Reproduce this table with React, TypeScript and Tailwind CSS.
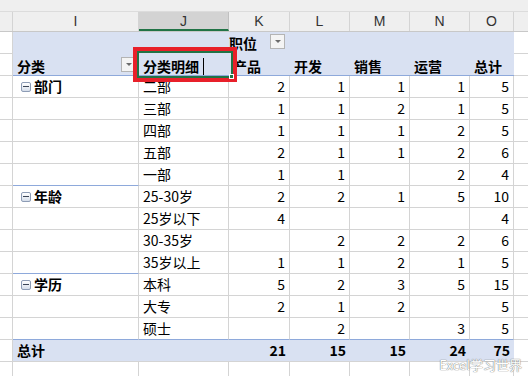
import React from 'react'

type Row = {
  group?: string
  label: string
  vals: (number | null)[]
  lastInGroup?: boolean
}

const rows: Row[] = [
  { group: '部门', label: '二部', vals: [2, 1, 1, 1, 5] },
  { label: '三部', vals: [1, 1, 2, 1, 5] },
  { label: '四部', vals: [1, 1, 1, 2, 5] },
  { label: '五部', vals: [2, 1, 1, 2, 6] },
  { label: '一部', vals: [1, 1, null, 2, 4], lastInGroup: true },
  { group: '年龄', label: '25-30岁', vals: [2, 2, 1, 5, 10] },
  { label: '25岁以下', vals: [4, null, null, null, 4] },
  { label: '30-35岁', vals: [null, 2, 2, 2, 6] },
  { label: '35岁以上', vals: [1, 1, 2, 1, 5], lastInGroup: true },
  { group: '学历', label: '本科', vals: [5, 2, 3, 5, 15] },
  { label: '大专', vals: [2, 1, 2, null, 5] },
  { label: '硕士', vals: [null, 2, null, 3, 5], lastInGroup: true },
]

// widths of K..O
const valCols = ['w-[61px]', 'w-[60px]', 'w-[60px]', 'w-[60px]', 'w-[44px]']
const heads = ['产品', '开发', '销售', '运营', '总计']
const letters = [
  { l: 'K', w: 'w-[61px]' },
  { l: 'L', w: 'w-[60px]' },
  { l: 'M', w: 'w-[60px]' },
  { l: 'N', w: 'w-[60px]' },
  { l: 'O', w: 'w-[44px]' },
]

function Dropdown() {
  return (
    <div className="w-[15px] h-[15px] bg-[#f4f4f4] border border-[#b4b4b4] flex items-center justify-center shrink-0">
      <div className="w-0 h-0 border-l-[3px] border-r-[3px] border-t-[3px] border-l-transparent border-r-transparent border-t-[#6b6b6b]" />
    </div>
  )
}

function Minus() {
  return (
    <div className="w-[10px] h-[10px] rounded-[2px] border border-[#8d9cb5] bg-gradient-to-b from-white to-[#d6deea] flex items-center justify-center mr-[3px]">
      <div className="w-[6px] h-px bg-[#3b4556]" />
    </div>
  )
}

export default function App() {
  return (
    <div className="relative w-[528px] h-[376px] overflow-hidden bg-white text-black font-['Noto_Sans_CJK_SC','Microsoft_YaHei',sans-serif] text-[14px]">
      {/* top strip */}
      <div className="h-[12px] bg-[#efefef] border-b border-[#dcdcdc]" />
      {/* column letters */}
      <div className="flex h-[20px] bg-[#efefef] border-b border-[#c8c8c8] text-[14px] text-[#333] font-['Liberation_Sans',sans-serif] leading-[19px]">
        <div className="w-[13px] border-r border-[#d4d4d4]" />
        <div className="w-[126px] border-r border-[#d4d4d4] text-center">I</div>
        <div className="w-[90px] bg-[#d3d3d3] border-r border-[#c0c0c0] border-b-2 border-b-[#217346] text-center">J</div>
        {letters.map((c) => (
          <div key={c.l} className={`${c.w} border-r border-[#d4d4d4] text-center`}>
            {c.l}
          </div>
        ))}
        <div className="flex-1" />
      </div>

      {/* pivot header row 1 */}
      <div className="flex h-[22px]">
        <div className="w-[13px] border-r border-b border-[#d4d4d4]" />
        <div className="w-[501px] bg-[#d9e1f2] flex items-start">
          <div className="w-[216px]" />
          <div className="flex items-start gap-[13px] pt-[1px]">
            <span className="font-bold leading-[20px]">职位</span>
            <div className="mt-[1px]">
              <Dropdown />
            </div>
          </div>
        </div>
        <div className="flex-1 border-b border-[#d4d4d4]" />
      </div>

      {/* pivot header row 2 */}
      <div className="flex h-[22px] font-bold">
        <div className="w-[13px] border-r border-b border-[#d4d4d4]" />
        <div className="w-[126px] bg-[#d9e1f2] border-b border-[#8ea9db] flex items-center justify-between pl-[4px] pr-[3px]">
          <span className="leading-[20px] pt-[2px]">分类</span>
          <Dropdown />
        </div>
        <div className="w-[90px] bg-[#d9e1f2] border-b border-[#8ea9db] pl-[4px] leading-[20px] pt-[2px]">分类明细</div>
        {heads.map((h, i) => (
          <div key={h} className={`${valCols[i]} bg-[#d9e1f2] border-b border-[#8ea9db] pl-[4px] leading-[20px] pt-[2px]`}>
            {h}
          </div>
        ))}
        <div className="flex-1 border-b border-[#d4d4d4]" />
      </div>

      {/* data rows */}
      {rows.map((r, idx) => {
        const last = idx === rows.length - 1
        const lineI = r.lastInGroup ? 'border-b-[#8ea9db]' : 'border-b-[#d4d4d4]'
        const lineRest = last ? 'border-b-[#8ea9db]' : 'border-b-[#d4d4d4]'
        return (
          <div key={idx} className="flex h-[22px] leading-[21px]">
            <div className="w-[13px] border-r border-b border-[#d4d4d4]" />
            <div className={`w-[126px] border-r border-b border-r-[#d4d4d4] ${lineI} flex items-center pl-[8px] font-bold`}>
              {r.group && (
                <>
                  <Minus />
                  <span>{r.group}</span>
                </>
              )}
            </div>
            <div className={`w-[90px] border-r border-b border-r-[#d4d4d4] ${lineRest} pl-[4px]`}>{r.label}</div>
            {r.vals.map((v, i) => (
              <div key={i} className={`${valCols[i]} border-r border-b border-r-[#d4d4d4] ${lineRest} text-right pr-[4px]`}>
                {v ?? ''}
              </div>
            ))}
            <div className="flex-1 border-b border-[#d4d4d4]" />
          </div>
        )
      })}

      {/* grand total */}
      <div className="flex h-[22px] leading-[21px] font-bold">
        <div className="w-[13px] border-r border-b border-[#d4d4d4]" />
        <div className="w-[216px] bg-[#d9e1f2] border-b border-[#d4d4d4] pl-[4px]">总计</div>
        {[21, 15, 15, 24, 75].map((v, i) => (
          <div key={i} className={`${valCols[i]} bg-[#d9e1f2] border-b border-[#d4d4d4] text-right pr-[4px]`}>
            {v}
          </div>
        ))}
        <div className="flex-1 border-b border-[#d4d4d4]" />
      </div>

      {/* trailing empty row */}
      <div className="flex h-[22px]">
        <div className="w-[13px] border-r border-[#d4d4d4]" />
        <div className="w-[126px] border-r border-[#d4d4d4]" />
        <div className="w-[90px] border-r border-[#d4d4d4]" />
        {valCols.map((w, i) => (
          <div key={i} className={`${w} border-r border-[#d4d4d4]`} />
        ))}
      </div>

      {/* active cell + red highlight */}
      <div className="absolute left-[133px] top-[47px] w-[104px] h-[35px] border-[4px] border-[#e8202a]">
        <div className="w-full h-full border-2 border-[#217346] relative">
          <div className="absolute right-[-3px] bottom-[-3px] w-[5px] h-[5px] bg-[#217346] border border-white" />
          <span className="absolute left-[64px] top-[5px] w-px h-[17px] bg-black" />
        </div>
      </div>

      {/* watermark */}
      <div className="absolute right-[6px] top-[357px] text-[13px] leading-[15px] text-white font-['Noto_Sans_CJK_SC',sans-serif] [text-shadow:0_0_1px_#777,0_0_1px_#777]">
        Excel学习世界
      </div>
    </div>
  )
}
